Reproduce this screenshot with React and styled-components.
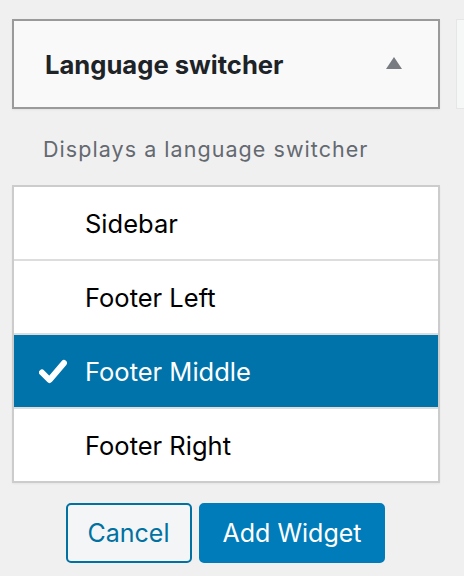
import React from "react";
import styled, { createGlobalStyle } from "styled-components";

const GlobalStyle = createGlobalStyle`
    html, body {
        margin: 0;
        padding: 0;
        background: #f0f0f1;
        overflow: hidden;
    }
    body {
        font-family: Inter, "Noto Sans", "Liberation Sans", sans-serif;
        color: #1d2327;
    }
`

const Page = styled.div`
    width: 464px;
    height: 576px;
    overflow: hidden;
    display: flex;
    gap: 16px;
    padding: 19px 0 0 12px;
    box-sizing: border-box;
`

const Column = styled.div`
    width: 428px;
    flex-shrink: 0;
    display: flex;
    flex-direction: column;
`

const NextCard = styled.div`
    width: 200px;
    height: 90px;
    flex-shrink: 0;
    box-sizing: border-box;
    background: #f6f7f7;
    border: 1px solid #e6e6e6;
`

const Header = styled.div`
    height: 90px;
    box-sizing: border-box;
    display: flex;
    align-items: center;
    justify-content: space-between;
    padding: 0 36px 0 31px;
    background: #f9f9f9;
    border: 2px solid #9a9a9a;
    box-shadow: 0 1px 2px rgba(0, 0, 0, 0.06);
`

const Title = styled.h3`
    margin: 0;
    font-size: 25.6px;
    font-weight: 700;
    color: #1d2327;
`

const Arrow = styled.span`
    width: 0;
    height: 0;
    border-left: 8px solid transparent;
    border-right: 8px solid transparent;
    border-bottom: 12px solid #787c82;
    margin-top: -2px;
`

const Description = styled.p`
    margin: 24px 0 0 31px;
    font-size: 21.5px;
    letter-spacing: 1.05px;
    line-height: 32px;
    color: #646970;
`

const List = styled.ul`
    list-style: none;
    margin: 20px 0 0;
    padding: 0;
    background: #fff;
    border: 2px solid #ccc;
    box-shadow: 0 1px 2px rgba(0, 0, 0, 0.05);
`

const Item = styled.li`
    height: 72px;
    display: flex;
    align-items: center;
    padding-left: 25px;
    font-size: 25.5px;
    color: ${({ selected }) => (selected ? "#fff" : "#000")};
    background: ${({ selected }) => (selected ? "#0073aa" : "#fff")};
    & + & {
        border-top: 2px solid #ddd;
    }
`

const Check = styled.span`
    width: 46px;
    display: flex;
    align-items: center;
`

const Actions = styled.div`
    display: flex;
    justify-content: center;
    gap: 7px;
    margin-top: 20px;
    padding-right: 1px;
`

const Button = styled.button`
    height: 60px;
    box-sizing: border-box;
    padding: 0 ${({ primary }) => (primary ? "22px" : "20px")};
    font-family: inherit;
    font-size: 25px;
    border-radius: 5px;
    border: 2px solid ${({ primary }) => (primary ? "#007cba" : "#0071a1")};
    background: ${({ primary }) => (primary ? "#007cba" : "#f3f5f6")};
    color: ${({ primary }) => (primary ? "#fff" : "#0071a1")};
    cursor: pointer;
`

const areas = ["Sidebar", "Footer Left", "Footer Middle", "Footer Right"];

const CheckIcon = () => (
    <svg width="28" height="25" viewBox="0 0 28 25">
        <path d="M3 13.5 L10.5 21 L25 4" fill="none" stroke="#fff" strokeWidth="6" strokeLinecap="round" strokeLinejoin="round" />
    </svg>
);

const App = () => {
    const selected = "Footer Middle";
    return (
        <>
            <GlobalStyle />
            <Page>
                <Column>
                    <Header>
                        <Title>Language switcher</Title>
                        <Arrow />
                    </Header>
                    <Description>Displays a language switcher</Description>
                    <List>
                        {areas.map((area) => (
                            <Item key={area} selected={area === selected}>
                                <Check>{area === selected && <CheckIcon />}</Check>
                                {area}
                            </Item>
                        ))}
                    </List>
                    <Actions>
                        <Button>Cancel</Button>
                        <Button primary>Add Widget</Button>
                    </Actions>
                </Column>
                <NextCard />
            </Page>
        </>
    );
};

export default App;
